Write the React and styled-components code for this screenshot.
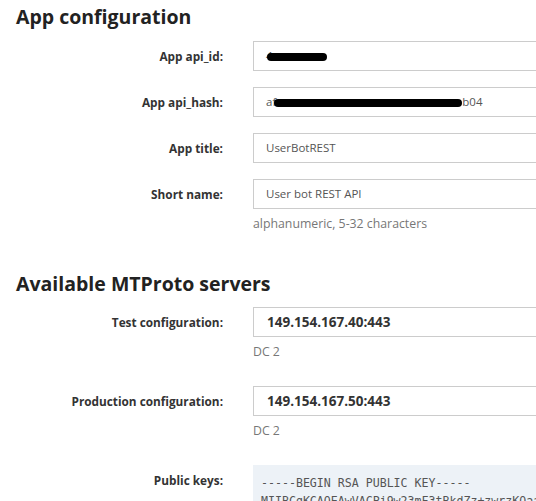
import styled, { createGlobalStyle } from "styled-components";

const GlobalStyle = createGlobalStyle`
  html, body {
    margin: 0;
    padding: 0;
    background: #fff;
    overflow: hidden;
  }
  body {
    font-family: "Open Sans", sans-serif;
    color: #333;
  }
`;

const Page = styled.div`
  padding: 0 0 0 16px;
  width: 620px;
`;

const Heading = styled.h2`
  margin: ${(p) => p.$top || 0}px 0 0;
  font-size: 19.5px;
  font-weight: bold;
  color: #222;
  line-height: 34px;
`;

const Form = styled.div`
  display: flex;
  flex-direction: column;
  gap: ${(p) => p.$gap || 16}px;
  margin-top: ${(p) => p.$top || 0}px;
`;

const Row = styled.div`
  display: flex;
  align-items: flex-start;
`;

const Label = styled.div`
  width: 237px;
  padding-right: 30px;
  box-sizing: border-box;
  text-align: right;
  font-size: 11.8px;
  font-weight: bold;
  color: #333;
  line-height: 30px;
  flex-shrink: 0;
`;

const Field = styled.div`
  display: flex;
  flex-direction: column;
`;

const Input = styled.div`
  width: 320px;
  height: 30px;
  box-sizing: border-box;
  border: 1px solid #ccc;
  padding: 0 ${(p) => (p.$strong ? 13 : 12)}px;
  font-size: ${(p) => (p.$strong ? 13.5 : 11.5)}px;
  line-height: 28px;
  font-weight: ${(p) => (p.$strong ? "bold" : "normal")};
  color: ${(p) => (p.$strong ? "#333" : "#555")};
`;

const Help = styled.div`
  font-size: 12.3px;
  color: #777;
  margin-top: 8px;
  line-height: 14px;
`;

const Scribble = styled.span`
  display: inline-block;
  width: ${(p) => p.$w}px;
  height: ${(p) => p.$h || 7}px;
  background: #000;
  border-radius: 6px;
  vertical-align: middle;
  margin-left: ${(p) => p.$ml || 0}px;
`;

const KeyBox = styled.pre`
  margin: 0;
  width: 320px;
  box-sizing: border-box;
  background: #edf2f7;
  padding: 9px 0 0 8px;
  font-family: "DejaVu Sans Mono", monospace;
  font-size: 11.6px;
  line-height: 18px;
  color: #555;
`;

const KeyLabel = styled(Label)`
  line-height: 14px;
  padding-top: 8px;
`;

export default function App() {
  return (
    <Page>
      <GlobalStyle />
      <Heading>App configuration</Heading>
      <Form $top={7}>
        <Row>
          <Label>App api_id:</Label>
          <Input>
            4<Scribble $w={60} $h={8} $ml={-6} />
          </Input>
        </Row>
        <Row>
          <Label>App api_hash:</Label>
          <Input>
            af<Scribble $w={188} $h={8} $ml={-2} />b04
          </Input>
        </Row>
        <Row>
          <Label>App title:</Label>
          <Input>UserBotREST</Input>
        </Row>
        <Row>
          <Label>Short name:</Label>
          <Field>
            <Input>User bot REST API</Input>
            <Help>alphanumeric, 5-32 characters</Help>
          </Field>
        </Row>
      </Form>

      <Heading $top={36}>Available MTProto servers</Heading>
      <Form $top={6} $gap={27}>
        <Row>
          <Label>Test configuration:</Label>
          <Field>
            <Input $strong>149.154.167.40:443</Input>
            <Help>DC 2</Help>
          </Field>
        </Row>
        <Row>
          <Label>Production configuration:</Label>
          <Field>
            <Input $strong>149.154.167.50:443</Input>
            <Help>DC 2</Help>
          </Field>
        </Row>
        <Row>
          <KeyLabel>Public keys:</KeyLabel>
          <KeyBox>
            {"-----BEGIN RSA PUBLIC KEY-----\nMIIBCgKCAQEAwVACPi9w23mF3tBkdZz+zwrzKOaaQdr01vAbU4E1pvkfj4sqDsm6"}
          </KeyBox>
        </Row>
      </Form>
    </Page>
  );
}
